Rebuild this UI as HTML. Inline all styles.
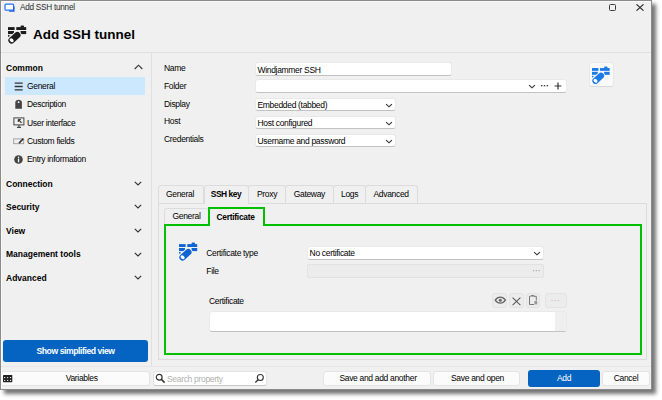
<!DOCTYPE html>
<html><head><meta charset="utf-8">
<style>
*{box-sizing:border-box;margin:0;padding:0}
html,body{width:662px;height:400px;background:#fff;overflow:hidden}
body{position:relative;font-family:"Liberation Sans",sans-serif;color:#1b1b1b}
.win{position:absolute;left:0;top:0;width:652px;height:390px;background:#f0f0f0;border:1px solid #8a8a8a;box-shadow:4px 4px 4px rgba(0,0,0,.55), inset 1px 1px 0 #f9f9f9}
.a{position:absolute}
.t{position:absolute;font-size:8.5px;line-height:10px;letter-spacing:-0.32px;white-space:nowrap;color:#000}
.b{font-weight:bold;font-size:8.5px;letter-spacing:0;color:#000}
.inp{position:absolute;background:#fff;border:1px solid #e9e9e9;border-bottom:1px solid #c2c2c2;border-radius:3px}
.hsep{position:absolute;height:1px;background:#e0e0e0}
.vsep{position:absolute;width:1px;background:#e0e0e0}
.btn{position:absolute;background:#fbfbfb;border:1px solid #e3e3e3;border-radius:3px}
.blue{position:absolute;background:#0563c1;border-radius:3px}
.tab{position:absolute;border:1px solid #dcdcdc;border-bottom:none;border-radius:3px 3px 0 0;background:#f0f0f0}
</style></head><body>
<div class="win"></div>

<!-- title bar -->
<svg class="a" style="left:4px;top:3px" width="12" height="10" viewBox="0 0 12 10">
  <rect x="1" y="1.2" width="8.6" height="6" rx="1" fill="#fff" stroke="#2a72f7" stroke-width="1.25"/>
  <path d="M9.9 3.6V8.2H5" fill="none" stroke="#1657e6" stroke-width="1.2"/>
</svg>
<div class="t" style="left:20px;top:3.3px;font-size:8.2px;letter-spacing:-0.25px;color:#2a2a2a">Add SSH tunnel</div>
<div class="a" style="left:609px;top:4px;width:7px;height:7px;border:1.2px solid #3c3c3c;border-radius:1.5px"></div>
<svg class="a" style="left:636px;top:4px" width="8" height="7" viewBox="0 0 8 7"><path d="M0.5 0.3 L7.5 6.7 M7.5 0.3 L0.5 6.7" stroke="#2b2b2b" stroke-width="1.1"/></svg>

<!-- header -->
<svg class="a" style="left:7.6px;top:24.9px" width="19.00" height="19.00" viewBox="0 0 19 19">
  <g fill="#1b1b1b">
    <rect x="0" y="2.1" width="6.6" height="2.9"/>
    <rect x="8.3" y="2.1" width="9.9" height="2.9"/>
    <rect x="12.5" y="0.4" width="3.6" height="2.2" rx="1.1"/>
    <rect x="0" y="6.0" width="6" height="3.1"/>
    <rect x="12.5" y="6.0" width="5.7" height="3.1"/>
    <rect x="0" y="10.1" width="1.6" height="1.6"/>
  </g>
  <line x1="3.55" y1="15.3" x2="9.3" y2="10.1" stroke="#f0f0f0" stroke-width="8.2" stroke-linecap="round"/>
  <line x1="3.55" y1="15.3" x2="9.3" y2="10.1" stroke="#1b1b1b" stroke-width="6.4" stroke-linecap="round"/>
  <ellipse cx="3.6" cy="15.25" rx="2.2" ry="1.75" transform="rotate(40 3.6 15.25)" fill="#fff"/>
</svg>
<div class="t b" style="left:33px;top:27px;font-size:13.5px;line-height:15px">Add SSH tunnel</div>
<div class="hsep" style="left:1px;top:52px;width:650px"></div>

<!-- left panel -->
<div class="vsep" style="left:151px;top:53px;height:313px"></div>
<div class="t b" style="left:6px;top:63px">Common</div>
<svg class="a" style="left:134px;top:64px" width="9" height="6" viewBox="0 0 9 6"><path d="M0.7 5 L4.5 1.2 L8.3 5" fill="none" stroke="#333" stroke-width="1.1"/></svg>
<div class="a" style="left:5px;top:77px;width:140px;height:18px;background:#cce8ff"></div>
<div class="t" style="left:27px;top:81px">General</div>
<div class="t" style="left:27px;top:99px">Description</div>
<div class="t" style="left:27px;top:118px">User interface</div>
<div class="t" style="left:27px;top:136px">Custom fields</div>
<div class="t" style="left:27px;top:154px">Entry information</div>

<!-- nav icons -->
<svg class="a" style="left:14px;top:82px" width="9" height="9" viewBox="0 0 9 9"><path d="M0.7 1.1H8.7M0.7 4.5H8.7M0.7 7.8H8.7" stroke="#333" stroke-width="1.3"/></svg>
<svg class="a" style="left:15px;top:99px" width="8" height="10" viewBox="0 0 8 10"><path d="M0.3 9.8V3.6C0.3 1.6 1.8 0.8 3.6 0.8C5.4 0.8 6.9 1.6 6.9 3.6V9.8Z" fill="#444"/><circle cx="3.6" cy="3.2" r="0.9" fill="#fff"/></svg>
<svg class="a" style="left:13px;top:117px" width="12" height="11" viewBox="0 0 12 11"><rect x="0.9" y="0.9" width="10" height="7" fill="none" stroke="#444" stroke-width="1"/><path d="M4 10.4H8M6 8V10.4" stroke="#444" stroke-width="1.1"/><path d="M5.3 2.5L8.6 5.8M5.3 2.5V5M5.3 2.5H7.8" stroke="#333" stroke-width="1.1" fill="none"/></svg>
<svg class="a" style="left:13px;top:137px" width="12" height="8" viewBox="0 0 12 8"><rect x="0.7" y="1.9" width="10" height="4.8" fill="none" stroke="#9a9a9a" stroke-width="0.9"/><path d="M6 6.3L10.3 1.6" stroke="#333" stroke-width="1.6"/></svg>
<svg class="a" style="left:14px;top:155px" width="9" height="9" viewBox="0 0 9 9"><circle cx="4.5" cy="4.5" r="4.3" fill="#444"/><rect x="3.9" y="3.6" width="1.3" height="3.6" fill="#fff"/><circle cx="4.55" cy="2.2" r="0.75" fill="#fff"/></svg>
<div class="t b" style="left:6px;top:179px">Connection</div>
<div class="t b" style="left:6px;top:202px">Security</div>
<div class="t b" style="left:6px;top:226px">View</div>
<div class="t b" style="left:6px;top:249px">Management tools</div>
<div class="t b" style="left:6px;top:273px">Advanced</div>
<div class="blue" style="left:3px;top:340px;width:145px;height:21.5px"></div>
<div class="t b" style="left:3px;top:346px;width:145px;text-align:center;color:#fff;font-size:8.6px;letter-spacing:-0.42px">Show simplified view</div>

<!-- form -->
<div class="t" style="left:164px;top:63px">Name</div>
<div class="t" style="left:164px;top:81px">Folder</div>
<div class="t" style="left:164px;top:99px">Display</div>
<div class="t" style="left:164px;top:116px">Host</div>
<div class="t" style="left:164px;top:134px">Credentials</div>
<div class="inp" style="left:255px;top:62px;width:196.5px;height:14px"></div>
<div class="t" style="left:257.5px;top:65px">Windjammer SSH</div>
<div class="inp" style="left:255px;top:79px;width:311.5px;height:14px"></div>
<div class="inp" style="left:255px;top:97.8px;width:140.5px;height:13.6px"></div>
<div class="t" style="left:257.5px;top:100px">Embedded (tabbed)</div>
<div class="inp" style="left:255px;top:115.6px;width:140.5px;height:13.6px"></div>
<div class="t" style="left:257.5px;top:118px">Host configured</div>
<div class="inp" style="left:255px;top:133.6px;width:140.5px;height:13.6px"></div>
<div class="t" style="left:257.5px;top:136px">Username and password</div>

<div class="btn" style="left:589px;top:62px;width:25px;height:25px;background:#f9f9f9;border-color:#e8e8e8;border-bottom-color:#dadada"></div>
<svg class="a" style="left:592px;top:66px" width="18.43" height="18.43" viewBox="0 0 19 19">
  <g fill="#1a7ae6">
    <rect x="0" y="2.1" width="6.6" height="2.9"/>
    <rect x="8.3" y="2.1" width="9.9" height="2.9"/>
    <rect x="12.5" y="0.4" width="3.6" height="2.2" rx="1.1"/>
    <rect x="0" y="6.0" width="6" height="3.1"/>
    <rect x="12.5" y="6.0" width="5.7" height="3.1"/>
    <rect x="0" y="10.1" width="1.6" height="1.6"/>
  </g>
  <line x1="3.55" y1="15.3" x2="9.3" y2="10.1" stroke="#f9f9f9" stroke-width="8.2" stroke-linecap="round"/>
  <line x1="3.55" y1="15.3" x2="9.3" y2="10.1" stroke="#1a7ae6" stroke-width="6.4" stroke-linecap="round"/>
  <ellipse cx="3.6" cy="15.25" rx="2.2" ry="1.75" transform="rotate(40 3.6 15.25)" fill="#fff"/>
</svg>

<!-- tabs -->
<div class="a" style="left:158px;top:203px;width:489px;height:157px;border:1px solid #dcdcdc"></div>
<div class="tab" style="left:158px;top:185px;width:46px;height:18px"></div>
<div class="tab" style="left:204px;top:185px;width:45px;height:19px"></div>
<div class="tab" style="left:248px;top:185px;width:38px;height:18px"></div>
<div class="tab" style="left:285px;top:185px;width:49px;height:18px"></div>
<div class="tab" style="left:333px;top:185px;width:33px;height:18px"></div>
<div class="tab" style="left:365px;top:185px;width:53px;height:18px"></div>
<div class="t" style="left:166px;top:189px">General</div>
<div class="t b" style="left:210.8px;top:188.8px;font-size:8.4px;letter-spacing:-0.45px">SSH key</div>
<div class="t" style="left:257px;top:189px">Proxy</div>
<div class="t" style="left:293.7px;top:189px">Gateway</div>
<div class="t" style="left:341px;top:189px">Logs</div>
<div class="t" style="left:373.5px;top:189px">Advanced</div>

<div class="tab" style="left:164px;top:208px;width:45px;height:17px"></div>
<div class="t" style="left:172.5px;top:211px">General</div>
<div class="t b" style="left:216.5px;top:212.3px;font-size:8.4px;letter-spacing:-0.25px">Certificate</div>

<!-- green outline -->
<svg class="a" style="left:0;top:0" width="662" height="400">
  <path d="M165 225 L209 225 L209 208 L264 208 L264 225 L641 225 L641 354 L165 354 Z" fill="none" stroke="#00c000" stroke-width="2"/>
</svg>

<!-- certificate panel -->
<svg class="a" style="left:178.9px;top:242px" width="19.00" height="19.00" viewBox="0 0 19 19">
  <g fill="#0f63d2">
    <rect x="0" y="2.1" width="6.6" height="2.9"/>
    <rect x="8.3" y="2.1" width="9.9" height="2.9"/>
    <rect x="12.5" y="0.4" width="3.6" height="2.2" rx="1.1"/>
    <rect x="0" y="6.0" width="6" height="3.1"/>
    <rect x="12.5" y="6.0" width="5.7" height="3.1"/>
    <rect x="0" y="10.1" width="1.6" height="1.6"/>
  </g>
  <line x1="3.55" y1="15.3" x2="9.3" y2="10.1" stroke="#f0f0f0" stroke-width="8.2" stroke-linecap="round"/>
  <line x1="3.55" y1="15.3" x2="9.3" y2="10.1" stroke="#0f63d2" stroke-width="6.4" stroke-linecap="round"/>
  <ellipse cx="3.6" cy="15.25" rx="2.2" ry="1.75" transform="rotate(40 3.6 15.25)" fill="#fff"/>
</svg>
<div class="t" style="left:206.3px;top:248px">Certificate type</div>
<div class="t" style="left:206.3px;top:266px">File</div>
<div class="inp" style="left:307px;top:246px;width:237px;height:14px"></div>
<div class="t" style="left:309.6px;top:248px">No certificate</div>
<div class="a" style="left:307px;top:264px;width:237px;height:14px;background:#ececec;border:1px solid #e2e2e2;border-radius:2px"></div>
<div class="t" style="left:209px;top:296px">Certificate</div>
<div class="btn" style="left:492px;top:293px;width:15px;height:15px;background:#ececec"></div>
<div class="btn" style="left:509px;top:293px;width:15px;height:15px;background:#ececec"></div>
<div class="btn" style="left:526px;top:293px;width:14px;height:15px;background:#ececec"></div>
<div class="btn" style="left:545px;top:293px;width:22px;height:15px;background:#ececec"></div>
<div class="inp" style="left:209px;top:311px;width:358px;height:21px"></div>
<div class="a" style="left:555px;top:312px;width:11px;height:19px;background:#efefef"></div>

<!-- bottom -->
<div class="hsep" style="left:1px;top:366px;width:650px;background:#e6e6e6"></div>
<div class="btn" style="left:1px;top:371px;width:149px;height:15px;border-left:none"></div>
<div class="t" style="left:65.7px;top:373px">Variables</div>
<div class="inp" style="left:153px;top:371px;width:113.5px;height:15px;border-color:#e3e3e3;border-bottom-color:#c8c8c8"></div>
<div class="t" style="left:167px;top:374px;color:#b0b0b0">Search property</div>
<div class="btn" style="left:323px;top:371px;width:108px;height:15px"></div>
<div class="t" style="left:339.4px;top:373px">Save and add another</div>
<div class="btn" style="left:433px;top:371px;width:87px;height:15px"></div>
<div class="t" style="left:451px;top:373px">Save and open</div>
<div class="blue" style="left:528px;top:370px;width:72px;height:17px"></div>
<div class="t" style="left:528px;top:373px;width:72px;text-align:center;color:#fff">Add</div>
<div class="btn" style="left:601.5px;top:371px;width:48px;height:15px"></div>
<div class="t" style="left:613.7px;top:373px">Cancel</div>

<!-- icons -->
<svg class="a" style="left:134.3px;top:181.0px" width="8" height="5" viewBox="0 0 8 5"><path d="M0.8 0.9L4 4L7.2 0.9" fill="none" stroke="#333" stroke-width="1.15"/></svg>
<svg class="a" style="left:134.3px;top:204.4px" width="8" height="5" viewBox="0 0 8 5"><path d="M0.8 0.9L4 4L7.2 0.9" fill="none" stroke="#333" stroke-width="1.15"/></svg>
<svg class="a" style="left:134.3px;top:227.9px" width="8" height="5" viewBox="0 0 8 5"><path d="M0.8 0.9L4 4L7.2 0.9" fill="none" stroke="#333" stroke-width="1.15"/></svg>
<svg class="a" style="left:134.3px;top:251.8px" width="8" height="5" viewBox="0 0 8 5"><path d="M0.8 0.9L4 4L7.2 0.9" fill="none" stroke="#333" stroke-width="1.15"/></svg>
<svg class="a" style="left:134.3px;top:275.2px" width="8" height="5" viewBox="0 0 8 5"><path d="M0.8 0.9L4 4L7.2 0.9" fill="none" stroke="#333" stroke-width="1.15"/></svg>
<svg class="a" style="left:384.8px;top:102.5px" width="8" height="5" viewBox="0 0 8 5"><path d="M1.1 1.1L4 3.8L6.9 1.1" fill="none" stroke="#333" stroke-width="1.15"/></svg>
<svg class="a" style="left:384.8px;top:120.5px" width="8" height="5" viewBox="0 0 8 5"><path d="M1.1 1.1L4 3.8L6.9 1.1" fill="none" stroke="#333" stroke-width="1.15"/></svg>
<svg class="a" style="left:384.8px;top:138.5px" width="8" height="5" viewBox="0 0 8 5"><path d="M1.1 1.1L4 3.8L6.9 1.1" fill="none" stroke="#333" stroke-width="1.15"/></svg>
<svg class="a" style="left:532.7px;top:250.6px" width="8" height="5" viewBox="0 0 8 5"><path d="M1.1 1.1L4 3.8L6.9 1.1" fill="none" stroke="#333" stroke-width="1.15"/></svg>
<svg class="a" style="left:527.7px;top:84.3px" width="8" height="5" viewBox="0 0 8 5"><path d="M1.1 1.1L4 3.8L6.9 1.1" fill="none" stroke="#333" stroke-width="1.15"/></svg>
<svg class="a" style="left:540px;top:84px" width="9" height="4" viewBox="0 0 9 4"><rect x="1" y="1" width="1.4" height="1.4" fill="#444"/><rect x="3.8" y="1" width="1.4" height="1.4" fill="#444"/><rect x="6.6" y="1" width="1.4" height="1.4" fill="#444"/></svg>
<svg class="a" style="left:554px;top:82px" width="8" height="8" viewBox="0 0 8 8"><path d="M4 0.6V7.4M0.6 4H7.4" stroke="#333" stroke-width="1.2"/></svg>
<svg class="a" style="left:532px;top:269px" width="9" height="4" viewBox="0 0 9 4"><rect x="1" y="1" width="1.2" height="1.2" fill="#aaa"/><rect x="3.8" y="1" width="1.2" height="1.2" fill="#aaa"/><rect x="6.6" y="1" width="1.2" height="1.2" fill="#aaa"/></svg>
<svg class="a" style="left:494px;top:296px" width="13" height="9" viewBox="0 0 13 9"><path d="M1.2 4.2C2.8 1.9 4.5 1.2 6.3 1.2C8.1 1.2 9.8 1.9 11.4 4.2C9.8 6.5 8.1 7.2 6.3 7.2C4.5 7.2 2.8 6.5 1.2 4.2Z" fill="none" stroke="#666" stroke-width="1.3"/><circle cx="6.3" cy="4.3" r="1.5" fill="#666"/></svg>
<svg class="a" style="left:512px;top:296.5px" width="9" height="9" viewBox="0 0 9 9"><path d="M0.6 0.6L8.4 8.2M8.4 0.6L0.6 8.2" stroke="#5a5a5a" stroke-width="1.1"/></svg>
<svg class="a" style="left:528px;top:294px" width="11" height="12" viewBox="0 0 11 12"><path d="M2.7 2.3H1.5V10.5H6M5.8 2.3H8.3V6.5" fill="none" stroke="#777" stroke-width="1"/><path d="M2.6 2.6H6.4V1.7C6.4 1.1 5.4 0.9 4.5 0.9C3.6 0.9 2.6 1.1 2.6 1.7Z" fill="#777"/><rect x="6.4" y="7" width="2.8" height="3.4" fill="#999"/></svg>
<svg class="a" style="left:551px;top:299px" width="9" height="3" viewBox="0 0 9 3"><rect x="0.5" y="1" width="1" height="1" fill="#c9b2a8"/><rect x="3.5" y="1" width="1" height="1" fill="#c9b2a8"/><rect x="6.5" y="1" width="1" height="1" fill="#c9b2a8"/></svg>
<svg class="a" style="left:155px;top:373px" width="11" height="11" viewBox="0 0 11 11"><circle cx="4.2" cy="4.2" r="2.9" fill="none" stroke="#333" stroke-width="1.2"/><path d="M6.3 6.3L9.6 9.6" stroke="#333" stroke-width="1.6"/></svg>
<svg class="a" style="left:254px;top:373px" width="11" height="11" viewBox="0 0 11 11"><circle cx="6.3" cy="4.5" r="3" fill="none" stroke="#333" stroke-width="1.1"/><path d="M4.1 6.7L1.3 9.5" stroke="#333" stroke-width="1.3"/></svg>
<svg class="a" style="left:3px;top:375px" width="10" height="8" viewBox="0 0 10 8"><rect x="0" y="0" width="9.3" height="7.2" rx="0.6" fill="#222"/><g fill="#f4f4f4"><rect x="1.1" y="2" width="1.1" height="1.1"/><rect x="4.1" y="2" width="1.1" height="1.1"/><rect x="7" y="2" width="1.1" height="1.1"/><rect x="1.1" y="4.9" width="1.1" height="1.1"/><rect x="4.1" y="4.9" width="1.1" height="1.1"/><rect x="7" y="4.9" width="1.1" height="1.1"/></g></svg>
</body></html>
